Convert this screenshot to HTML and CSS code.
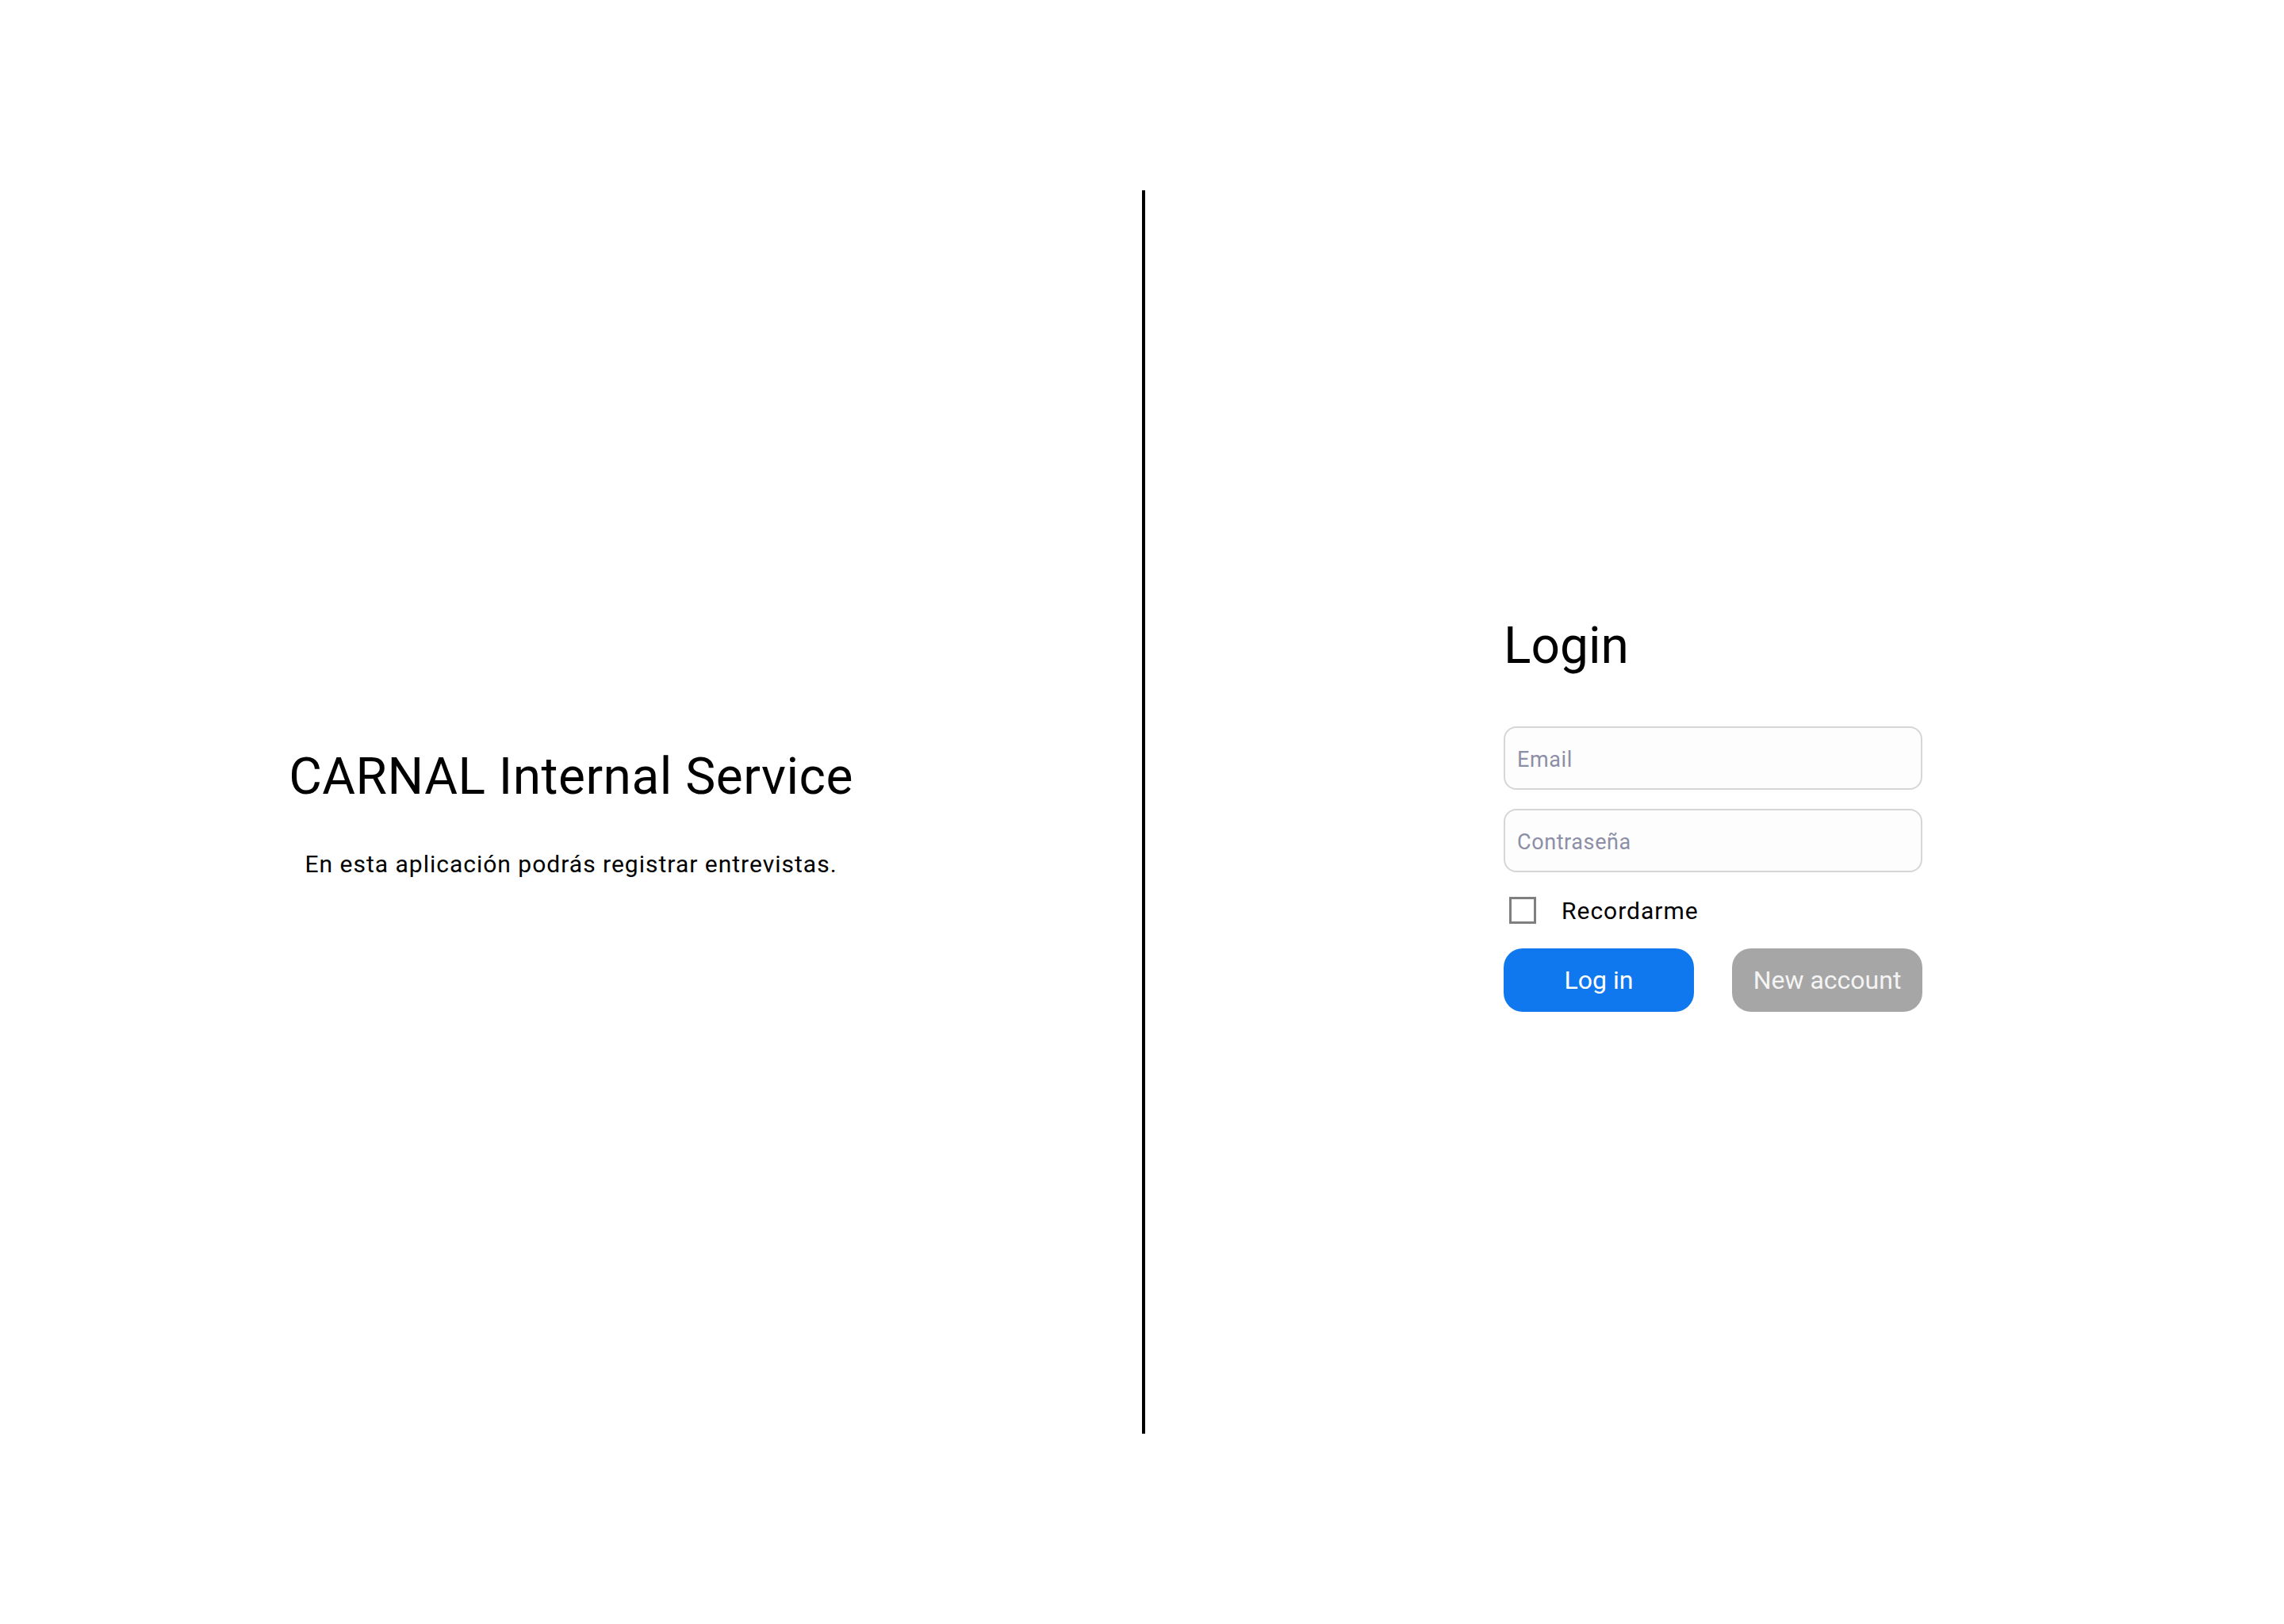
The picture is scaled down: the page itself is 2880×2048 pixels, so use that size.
FILE: index.html
```html
<!DOCTYPE html>
<html lang="es">
<head>
<meta charset="utf-8">
<title>CARNAL Internal Service</title>
<link rel="stylesheet" href="styles.css">
</head>
<body>
<main class="page">
  <section class="intro">
    <h1 class="intro-title">CARNAL Internal Service</h1>
    <p class="intro-text">En esta aplicación podrás registrar entrevistas.</p>
  </section>
  <div class="divider"></div>
  <section class="auth">
    <form class="login-form">
      <h2 class="login-title">Login</h2>
      <input class="field" type="email" placeholder="Email">
      <input class="field" type="password" placeholder="Contraseña">
      <label class="remember">
        <input class="check" type="checkbox">
        <span class="remember-text">Recordarme</span>
      </label>
      <div class="actions">
        <button type="button" class="btn btn-primary">Log in</button>
        <button type="button" class="btn btn-secondary">New account</button>
      </div>
    </form>
  </section>
</main>
</body>
</html>
```

FILE: styles.css
```css
html, body {
  margin: 0;
  padding: 0;
  background: #ffffff;
}

body {
  font-family: Roboto, "Liberation Sans", sans-serif;
  color: #000000;
}

.page {
  display: flex;
  align-items: center;
  height: 2048px;
  width: 2880px;
}

.intro {
  width: 1440px;
  display: flex;
  flex-direction: column;
  align-items: center;
}

.intro-title {
  margin: 0;
  font-size: 64px;
  font-weight: 400;
  line-height: 75px;
  letter-spacing: 0.5px;
}

.intro-text {
  margin: 55px 0 0;
  font-size: 30px;
  line-height: 35px;
  letter-spacing: 1px;
}

.divider {
  width: 4px;
  height: 1568px;
  background: #000000;
  flex-shrink: 0;
}

.auth {
  flex: 1;
  display: flex;
  justify-content: center;
  padding-right: 4px;
}

.login-form {
  width: 528px;
  display: flex;
  flex-direction: column;
}

.login-title {
  margin: 5px 0 64px 0;
  font-size: 64px;
  font-weight: 400;
  line-height: 75px;
}

.field {
  box-sizing: border-box;
  width: 528px;
  height: 80px;
  margin: 0 0 24px;
  padding: 3px 15px 0;
  border: 2px solid #d6d6d6;
  border-radius: 16px;
  background: #fdfdfd;
  font-family: Roboto, "Liberation Sans", sans-serif;
  font-size: 27px;
  letter-spacing: 0.6px;
  color: #000;
  outline: none;
}

.field::placeholder {
  color: #8c8fa6;
}

.remember {
  display: flex;
  align-items: center;
  gap: 32px;
  margin: 7px 0 0 7px;
  height: 34px;
}

.check {
  appearance: none;
  -webkit-appearance: none;
  box-sizing: border-box;
  width: 34px;
  height: 34px;
  margin: 0;
  border: 3px solid #7f7f7f;
  background: #ffffff;
  flex-shrink: 0;
}

.remember-text {
  font-size: 30px;
  letter-spacing: 1px;
}

.actions {
  display: flex;
  justify-content: space-between;
  margin-top: 31px;
}

.btn {
  width: 240px;
  height: 80px;
  border: none;
  border-radius: 24px;
  font-family: Roboto, "Liberation Sans", sans-serif;
  font-size: 32px;
  padding: 0;
  cursor: pointer;
}

.btn-primary {
  background: #1078ee;
  color: #ffffff;
}

.btn-secondary {
  background: #a6a6a6;
  color: #f4f4f4;
}
```
